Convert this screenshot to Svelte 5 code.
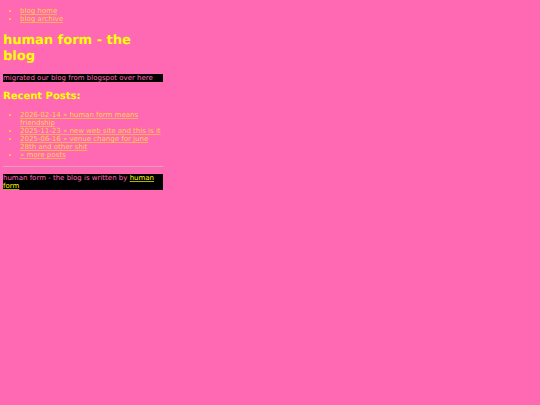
<script lang="ts">
	type Post = { date: string; title: string };

	const posts: Post[] = [
		{ date: '2026-02-14', title: 'human form means friendship' },
		{ date: '2025-11-23', title: 'new web site and this is it' },
		{ date: '2025-06-16', title: 'venue change for june 28th and other shit' }
	];
</script>

<svelte:head>
	<title>human form - the blog</title>
</svelte:head>

<div class="page">
	<nav>
		<ul>
			<li><a href="#home">blog home</a></li>
			<li><a href="#archive">blog archive</a></li>
		</ul>
	</nav>

	<main>
		<h1>human form - the blog</h1>
		<p>migrated our blog from blogspot over here</p>

		<h2>Recent Posts:</h2>
		<ul>
			{#each posts as post}
				<li><a href="#{post.date}">{post.date} » {post.title}</a></li>
			{/each}
			<li><a href="#archive">» more posts</a></li>
		</ul>
	</main>

	<hr />

	<footer>
		<p>human form - the blog is written by <a href="#about">human form</a></p>
	</footer>
</div>

<style>
	:global(body) {
		margin: 0 3px;
		background-color: hotpink;
	}

	.page {
		display: flow-root;
		width: 30%;
		color: hotpink;
		font-family: 'DejaVu Sans', sans-serif;
		font-size: 7px;
		line-height: 8px;
		text-rendering: geometricPrecision;
	}

	h1,
	h2 {
		color: yellow;
		font-weight: bold;
	}

	h1 {
		margin: 10px 0 9px;
		font-size: 13px;
		line-height: 16px;
	}

	h2 {
		margin: 9px 0 8px;
		font-size: 10px;
		line-height: 12px;
	}

	ul {
		margin: 7px 0;
		padding-left: 17px;
		color: #ffd633;
	}

	ul a {
		color: #ffd633;
		text-decoration-color: #ffae60;
	}

	p {
		margin: 0;
		background-color: black;
	}

	hr {
		height: 1px;
		margin: 7px 0;
		border: 0;
		background-color: #e0a0c0;
	}

	footer a {
		color: yellow;
		text-decoration-color: #b0b000;
	}
</style>
